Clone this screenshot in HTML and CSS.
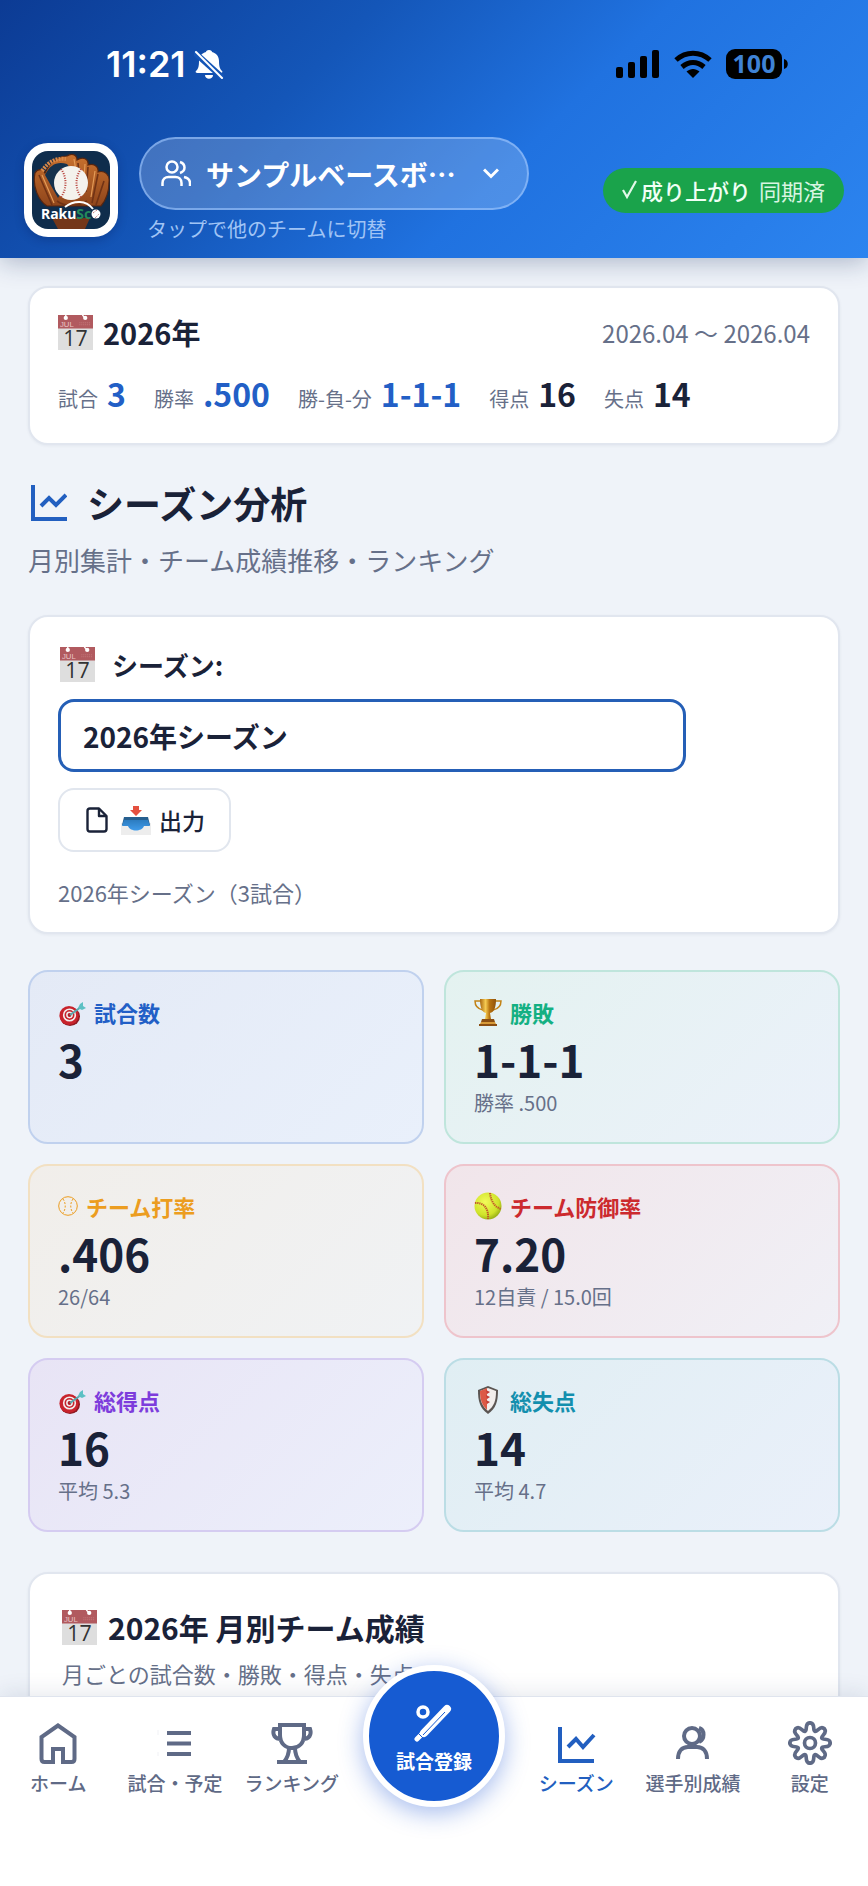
FILE: index.html
```html
<!DOCTYPE html>
<html lang="ja">
<head>
<meta charset="utf-8">
<meta name="viewport" content="width=device-width, initial-scale=1">
<title>シーズン分析</title>
<link rel="stylesheet" href="styles.css">
</head>
<body>
<svg class="defs" aria-hidden="true">
  <defs>
    <radialGradient id="lime" cx=".4" cy=".35" r=".7"><stop offset="0" stop-color="#f2fb5a"/><stop offset=".7" stop-color="#cfe32a"/><stop offset="1" stop-color="#8fa613"/></radialGradient>
    <linearGradient id="gold"><stop offset="0" stop-color="#a8650f"/><stop offset=".35" stop-color="#f6cb52"/><stop offset=".6" stop-color="#b8730f"/><stop offset="1" stop-color="#8f520a"/></linearGradient>
    <linearGradient id="leather" x2="0" y2="1"><stop offset="0" stop-color="#c9722f"/><stop offset="1" stop-color="#8f451b"/></linearGradient>
    <linearGradient id="tray" x2="0" y2="1"><stop offset="0" stop-color="#2c7cc0"/><stop offset="1" stop-color="#3f9bea"/></linearGradient>
    <path id="tooth" d="M11 0Q11 1.950 8.100 2.060Q5.200 2.150 7.190 4.290Q9.160 6.420 7.780 7.780"/>
  </defs>
  <symbol id="calendar" viewBox="0 0 36 36">
    <path fill="#dedede" d="M0 13h36v23H0z"/><path fill="#b15a5f" d="M0 0h36v14H0z"/>
    <circle cx="8" cy="3" r="2.200" fill="#fff"/><circle cx="28" cy="3" r="2.200" fill="#fff"/><path stroke="#fff" stroke-width="1.400" d="M8 0v3M25 0l3 3"/>
    <text x="2" y="12" font-family="Liberation Sans" font-weight="400" font-size="8" fill="#e8c4c5">JUL</text>
    <path stroke="#c4797c" stroke-dasharray="1 1" d="M22 8h12M22 10h12"/>
    <text x="18" y="32" text-anchor="middle" font-family="Open Sans" font-weight="400" font-size="22" fill="#333">17</text>
  </symbol>
  <symbol id="target" viewBox="0 0 28 28">
    <ellipse cx="12" cy="18.500" rx="10" ry="9.400" fill="#8e1a22"/><ellipse cx="11" cy="17.500" rx="9.600" ry="9.400" fill="#c8232c"/>
    <circle cx="11.500" cy="17" r="6.600" fill="#f3eeee"/><circle cx="11.500" cy="17" r="5" fill="#c8232c"/><circle cx="11.500" cy="17" r="3.400" fill="#f3eeee"/><circle cx="11.500" cy="17" r="1.900" fill="#b01d26"/>
    <path stroke="#58a9ae" stroke-width="2" d="M12 17l11-8"/><path fill="#5cc0c4" d="M20 10l2-4 3-2v4l3 2-4 2z"/>
  </symbol>
  <symbol id="cup" viewBox="0 0 28 28">
    <path fill="none" stroke="#c28216" stroke-width="1.500" d="M7 3H1c0 6 3 8 8 9M21 3h6c0 6-3 8-8 9"/>
    <path fill="url(#gold)" d="M6 1h16c0 9-2 13-6 14l1 6h-6l1-6C8 14 6 10 6 1z"/>
    <path fill="#8b4e12" d="M8 21h12l1 3H7zM5 26h18v2H5z"/><path fill="#d79a38" d="M7 24h14l1 2H6z"/>
  </symbol>
  <symbol id="softball" viewBox="0 0 28 28">
    <circle cx="14" cy="14" r="13.500" fill="url(#lime)"/>
    <path fill="none" stroke="#c2562a" stroke-width="2" stroke-dasharray="1.300 .8" d="M1 11c8-1 14 5 13 16M16 1c1 9 5 14 11 16"/>
  </symbol>
  <symbol id="shield" viewBox="0 0 28 28">
    <path fill="#5b5552" d="M14 0l10 4c0 12-2 18-10 24C6 22 4 16 4 4z"/>
    <path fill="#f2eeec" d="M14 2l8 3c0 10-2 15-8 20C8 20 6 15 6 5z"/><path fill="#dc5945" d="M13 2v22C8 19 6 14 6 5z"/>
    <path fill="#c33c33" d="M12 4l4 2-3 2zM12 9l4 2-3 2zM12 14l4 2-3 2z"/>
  </symbol>
  <symbol id="chart" viewBox="0 0 36 36"><path fill="none" stroke="currentColor" stroke-width="4" d="M2 0v34h34M10 21l8-8 7 7 10-10"/></symbol>
</svg>

<div class="app">
  <header class="header">
    <div class="status">
      <div class="status-side">
        <span class="time">11:21</span>
        <svg class="bell" viewBox="0 0 30 30"><path fill="#fff" d="M15 1c2 0 3 1 3 2 4 1 7 4 7 9 0 6 1 8 3 10 1 1 0 2-1 2H3c-1 0-2-1-1-2 2-2 3-4 3-10 0-5 3-8 7-9 0-1 1-2 3-2zM11 26h8c0 5-8 5-8 0z"/><path stroke="#1455b7" stroke-width="6" d="M0 3l30 27"/><path stroke="#fff" stroke-width="2" stroke-linecap="round" d="M2 3l26 26"/></svg>
      </div>
      <div class="status-side">
        <svg class="signal" viewBox="0 0 44 28"><rect y="17" width="7" height="11" rx="2"/><rect x="12" y="12" width="7" height="16" rx="2"/><rect x="24" y="6" width="7" height="22" rx="2"/><rect x="36" width="7" height="28" rx="2"/></svg>
        <svg class="wifi" viewBox="0 0 38 28"><g fill="none" stroke="#000" stroke-width="5"><path d="M2 10c10-9 24-9 34 0"/><path d="M8 17c7-6 15-6 22 0"/></g><path d="M12.500 21.500c4-3.500 9-3.500 13 0L19 28z"/></svg>
        <svg class="battery" viewBox="0 0 62 30"><rect width="56" height="30" rx="9"/><path d="M58 10c5 1 5 9 0 10z"/><text x="28" y="24" text-anchor="middle" font-family="Open Sans" font-weight="700" font-size="25" fill="#3f83d6">100</text></svg>
      </div>
    </div>
    <div class="team-bar">
      <div class="logo">
        <svg viewBox="0 0 78 78" role="img" aria-label="RakuSco">
          <rect width="78" height="78" rx="16" fill="#0f2d4c"/>
          <path fill="#74371a" d="M20 67h38l-5 11H26z"/>
          <path fill="url(#leather)" stroke="#552510" stroke-width="1.200" d="M3 22c3-5 8-4 10 0 5-11 14-17 22-17 4-3 10-2 10 4 6-4 12-1 11 5 5-2 11 1 10 7 7-2 12 3 11 10 0 10-3 18-8 24H15C7 50 0 36 3 22z"/>
          <path fill="#15324d" d="M13 24c5-11 13-14 22-11 4 4 4 12 0 18l-9 16z"/>
          <path fill="none" stroke="#713315" stroke-width="1.600" d="M7 24l13 30M46 12l1 12M56 16l-2 25M66 23l-6 29M72 30l-8 24M25 50c8 6 20 6 30 0"/>
          <path fill="none" stroke="#e49b57" stroke-width="1.200" d="M10 24l12 28M42 8l2 12M53 13l-1 15M63 20l-4 26"/>
          <path fill="none" stroke="#d98948" stroke-width="4" stroke-dasharray="2 1" d="M10 20C17 10 24 7 34 8"/>
          <circle cx="39" cy="32" r="17" fill="#f4f2ed"/>
          <path fill="none" stroke="#b63b35" stroke-width="2" stroke-dasharray="1 1.400" d="M29 18c6 8 6 20 0 28M49 18c-6 8-6 20 0 28"/>
          <path fill="none" stroke="#fff" stroke-width="2" d="M33 56c9-7 21-7 28 2"/>
          <text x="9" y="68" font-family="Noto Sans" font-size="14" font-weight="700" fill="#fff">Raku<tspan fill="#258a5a">Sc</tspan></text>
          <circle cx="64" cy="63" r="4.500" fill="#fff"/><path stroke="#a33" stroke-width=".8" stroke-dasharray="1 1" d="M61 62l4-3M63 67l4-4"/>
        </svg>
      </div>
      <div class="team">
        <button class="team-switch" type="button">
          <svg class="people" viewBox="0 0 30 28" fill="none" stroke="#fff" stroke-width="2.500"><circle cx="11" cy="7" r="5.500"/><path d="M1.500 26v-3c0-4 3-6 6-6h7c3 0 6 2 6 6v3M19 2c6 2 6 9 0 11M23 17c4 1 6 3 6 6v3"/></svg>
          <span class="team-name">サンプルベースボ…</span>
          <svg class="chevron" viewBox="0 0 16 11"><path fill="none" stroke="#fff" stroke-width="3" d="M1 1.500l7 7 7-7"/></svg>
        </button>
        <p class="team-hint">タップで他のチームに切替</p>
      </div>
      <div class="sync"><svg class="tick" viewBox="0 0 16 20"><path fill="none" stroke="#e2f8e8" stroke-width="2.200" d="M1 10l4 7L14 1"/></svg><b>成り上がり</b><span>同期済</span></div>
    </div>
  </header>

  <main class="main">
    <section class="card summary">
      <div class="summary-head">
        <h2 class="summary-year"><svg class="cal"><use href="#calendar"/></svg>2026年</h2>
        <span class="range">2026.04 ～ 2026.04</span>
      </div>
      <dl class="totals">
        <div><dt>試合</dt><dd class="accent">3</dd></div>
        <div><dt>勝率</dt><dd class="accent">.500</dd></div>
        <div><dt>勝-負-分</dt><dd class="accent">1-1-1</dd></div>
        <div><dt>得点</dt><dd>16</dd></div>
        <div><dt>失点</dt><dd>14</dd></div>
      </dl>
    </section>

    <div class="title">
      <h1><svg class="title-icon"><use href="#chart"/></svg>シーズン分析</h1>
      <p>月別集計・チーム成績推移・ランキング</p>
    </div>

    <section class="card season">
      <label class="season-label" for="season"><svg class="cal"><use href="#calendar"/></svg>シーズン:</label>
      <select class="season-select" id="season"><option>2026年シーズン</option></select>
      <button class="export" type="button">
        <svg class="file" viewBox="0 0 22 26"><path fill="none" stroke="#1a2238" stroke-width="2.400" stroke-linejoin="round" d="M4 1.500h9l7.500 7.500v13c0 1.500-1 2.500-2.500 2.500H4c-1.500 0-2.500-1-2.500-2.500V4C1.500 2.500 2.500 1.500 4 1.500zM13 1.500V9h7.500"/></svg>
        <svg class="inbox" viewBox="0 0 30 30"><path fill="#ededed" d="M0 18h30v12H0z"/><path fill="#265f8f" d="M3 12h24l2 8H1z"/><path fill="url(#tray)" d="M3 15h24l2 6h-6c-2 6-14 6-16 0H1z"/><path fill="#e4503f" d="M12 1h6v4h3l-6 6-6-6h3z"/></svg>
        <span>出力</span>
      </button>
      <p class="season-note">2026年シーズン（3試合）</p>
    </section>

    <section class="stats">
      <article class="stat blue"><h3><svg class="emoji"><use href="#target"/></svg>試合数</h3><strong>3</strong></article>
      <article class="stat green"><h3><svg class="emoji"><use href="#cup"/></svg>勝敗</h3><strong>1-1-1</strong><p>勝率 .500</p></article>
      <article class="stat amber"><h3><svg class="ball" viewBox="0 0 20 20" fill="none" stroke="currentColor"><circle cx="10" cy="10" r="9.300"/><path stroke-dasharray="2 1.500" d="M5 3c3 4 3 10 0 14M15 3c-3 4-3 10 0 14"/></svg>チーム打率</h3><strong>.406</strong><p>26/64</p></article>
      <article class="stat red"><h3><svg class="emoji"><use href="#softball"/></svg>チーム防御率</h3><strong>7.20</strong><p>12自責 / 15.0回</p></article>
      <article class="stat purple"><h3><svg class="emoji"><use href="#target"/></svg>総得点</h3><strong>16</strong><p>平均 5.3</p></article>
      <article class="stat teal"><h3><svg class="emoji"><use href="#shield"/></svg>総失点</h3><strong>14</strong><p>平均 4.7</p></article>
    </section>

    <section class="card monthly">
      <h2><svg class="cal"><use href="#calendar"/></svg>2026年 月別チーム成績</h2>
      <p>月ごとの試合数・勝敗・得点・失点</p>
    </section>
  </main>

  <nav class="nav">
    <a href="#home"><svg viewBox="0 0 44 44"><path d="M22 4.500L5.500 16v22c0 2 1 3 3 3H17V28h10v13h8.500c2 0 3-1 3-3V16z"/></svg>ホーム</a>
    <a href="#games"><svg viewBox="0 0 44 44"><path d="M14 12h24M14 22.500h24M14 33h24"/><path stroke="#f0f1f5" stroke-width="1" d="M5 9v5M5 31v4"/></svg>試合・予定</a>
    <a href="#ranking"><svg viewBox="0 0 44 44"><path d="M10 4h24v10c0 8-5 13-12 13S10 22 10 14zM10 8H4c-2 6 1 10 7 10M34 8h6c2 6-1 10-7 10M19 27c0 5-1 9-5 14M25 27c0 5 1 9 5 14M7 41h30"/></svg>ランキング</a>
    <div class="fab-slot">
      <button class="fab" type="button"><svg viewBox="0 0 40 40"><circle cx="9" cy="9" r="5" fill="none" stroke="#fff" stroke-width="3.500"/><path stroke="#fff" stroke-width="8" stroke-linecap="round" d="M10 30L33 6"/><path stroke="#fff" stroke-width="5" stroke-linecap="round" d="M3 36l6-6"/><path stroke="#165bd2" d="M9 32L31 9M4 30l6 6"/></svg>試合登録</button>
    </div>
    <a href="#season" class="current" aria-current="page"><svg viewBox="0 0 44 44"><path d="M6 6v34h34M14 26l8-8 7 8 11-12"/></svg>シーズン</a>
    <a href="#players"><svg viewBox="0 0 44 44"><circle cx="21" cy="15" r="8"/><path d="M7 38c0-8 4-12 10-12h9c6 0 10 4 10 12M28 7c6 2 6 11 0 14"/></svg>選手別成績</a>
    <a href="#settings"><svg viewBox="-12 -12 24 24"><g class="thin"><use href="#tooth"/><use href="#tooth" transform="rotate(45)"/><use href="#tooth" transform="rotate(90)"/><use href="#tooth" transform="rotate(135)"/><use href="#tooth" transform="rotate(180)"/><use href="#tooth" transform="rotate(225)"/><use href="#tooth" transform="rotate(270)"/><use href="#tooth" transform="rotate(315)"/><circle r="3"/></g></svg>設定</a>
  </nav>
</div>
</body>
</html>
```

FILE: styles.css
```css
* { box-sizing: border-box; }
body, h1, h2, h3, p, dl, dd { margin: 0; }
body {
  font-family: "Noto Sans CJK JP", sans-serif;
  color: #1a2238;
  background: #eff3f9;
}
svg { display: block; flex: none; }
button, select { font: inherit; color: inherit; }
.defs { position: absolute; width: 0; height: 0; }

.app { height: 100vh; display: flex; flex-direction: column; overflow: hidden; }

.header {
  position: relative;
  z-index: 1;
  padding: 36px 24px 15px;
  color: #fff;
  background: linear-gradient(135deg, #0c3b94 0%, #1456b8 34%, #2072e0 60%, #2c84ef 100%);
  box-shadow: 0 4px 24px rgba(15, 40, 90, .3);
}
.status { display: flex; justify-content: space-between; align-items: center; height: 56px; padding: 0 56px 0 82px; }
.status-side { display: flex; align-items: center; }
.time { font: 600 36px/40px Inter, sans-serif; }
.bell { width: 30px; height: 30px; margin-left: 8px; }
.signal { width: 44px; height: 28px; }
.wifi { width: 38px; height: 28px; margin-left: 14px; }
.battery { width: 62px; height: 30px; margin-left: 14px; }

.team-bar { display: flex; align-items: center; margin-top: 45px; }
.logo { width: 94px; height: 94px; padding: 8px; border-radius: 24px; background: #fff; box-shadow: 0 3px 10px rgba(0, 20, 70, .25); flex: none; }
.team { margin-left: 21px; min-width: 0; }
.team-switch {
  display: flex; align-items: center;
  width: 390px; max-width: 100%; height: 73px; padding: 0 28px 0 20px;
  border: 2px solid rgba(160, 200, 255, .6);
  border-radius: 37px;
  background: rgba(255, 255, 255, .2);
}
.people { width: 30px; height: 28px; }
.team-name { margin-left: 15px; font-size: 28px; font-weight: 700; white-space: nowrap; overflow: hidden; }
.chevron { width: 16px; height: 11px; margin-left: auto; }
.team-hint { margin: 5px 0 0 8px; font-size: 20px; line-height: 28px; color: #a0c4f5; }
.sync {
  display: flex; align-items: center;
  height: 45px; margin-left: auto; padding: 0 19px;
  border-radius: 23px; background: #1aa34b; color: #d8f5e1;
  font-size: 22px; white-space: nowrap;
}
.sync b { margin: 0 8px 0 3px; font-weight: 500; color: #f0fff5; }
.tick { width: 16px; height: 20px; }

.main { flex: 1; min-height: 0; overflow-y: auto; scrollbar-width: none; padding: 28px; }
.card { border: 2px solid #e1e6ef; border-radius: 20px; background: #fff; padding: 28px; box-shadow: 0 1px 3px rgba(30, 50, 90, .06); }
.cal { width: 35px; height: 35px; }

.summary { padding: 24px 28px 20px; }
.summary-head { display: flex; justify-content: space-between; align-items: center; height: 40px; }
.summary-year { display: flex; align-items: center; gap: 10px; font-size: 29px; line-height: 40px; }
.range { font-size: 24px; color: #667089; }
.totals { display: flex; gap: 28px; margin-top: 17px; }
.totals div { display: flex; align-items: baseline; gap: 9px; line-height: 48px; }
.totals dt { font-size: 20px; color: #667089; }
.totals dd { font-size: 32px; font-weight: 700; }
.totals .accent { color: #225fc6; }

.title { margin-top: 30px; }
.title h1 { display: flex; align-items: center; gap: 20px; font-size: 37px; line-height: 56px; padding-left: 3px; }
.title-icon { width: 36px; height: 36px; color: #225fc0; }
.title p { margin-top: 10px; font-size: 26px; line-height: 38px; color: #667089; }

.season { margin-top: 36px; padding-bottom: 24px; }
.season-label { display: flex; align-items: center; gap: 17px; height: 38px; padding-left: 2px; font-size: 26px; font-weight: 700; }
.season-select {
  display: block; appearance: none;
  width: 100%; max-width: 628px; height: 73px; margin-top: 16px; padding: 0 22px;
  border: 3px solid #255fb6; border-radius: 16px; background: #fff;
  font-size: 28px; font-weight: 700;
}
.export {
  display: flex; align-items: center;
  height: 64px; margin-top: 16px; padding: 0 24px 0 26px;
  border: 2px solid #e1e6ee; border-radius: 16px; background: #fff;
  font-size: 23px; font-weight: 500;
}
.file { width: 22px; height: 26px; }
.inbox { width: 30px; height: 30px; margin: 0 8px 0 13px; }
.season-note { margin-top: 24px; font-size: 22px; line-height: 32px; color: #667089; }

.stats { display: grid; grid-template-columns: 1fr 1fr; gap: 20px; margin-top: 36px; }
.stat { min-height: 174px; padding: 23px 28px 25px; border: 2px solid; border-radius: 20px; }
.stat h3 { display: flex; align-items: center; gap: 8px; height: 34px; font-size: 22px; line-height: 34px; }
.emoji { width: 28px; height: 28px; }
.ball { width: 20px; height: 20px; }
.stat strong { display: block; font-size: 44px; line-height: 60px; }
.stat p { font-size: 20px; line-height: 28px; color: #667089; }
.blue { border-color: #c0d1ee; background: linear-gradient(135deg, #e4eaf6, #e9f0fb); }
.blue h3 { color: #225fc6; }
.green { border-color: #bfe5dc; background: linear-gradient(135deg, #e4f2f0, #ebf1fa); }
.green h3 { color: #14b083; }
.amber { border-color: #f2e0c2; background: linear-gradient(135deg, #f1eeea, #f0f2f4); }
.amber h3 { color: #ec9d20; }
.red { border-color: #eec4cc; background: linear-gradient(135deg, #f1e5ea, #f0f0f6); }
.red h3 { color: #cc2a2e; }
.purple { border-color: #d5ccf1; background: linear-gradient(135deg, #e8e4f5, #eceffb); }
.purple h3 { color: #7d3cdc; }
.teal { border-color: #bbdde5; background: linear-gradient(135deg, #e0eef3, #eaf0fa); }
.teal h3 { color: #138fae; }

.monthly { margin-top: 40px; padding: 31px 32px; }
.monthly h2 { display: flex; align-items: center; gap: 11px; font-size: 30px; line-height: 44px; }
.monthly p { margin-top: 8px; font-size: 22px; line-height: 32px; color: #667089; }

.nav {
  position: relative; z-index: 1;
  display: flex; flex: none;
  height: 190px; padding-top: 24px;
  border-top: 1px solid #dfe4ee; background: #fff;
  box-shadow: 0 -4px 20px rgba(30, 50, 90, .1);
}
.nav a {
  flex: 1; display: flex; flex-direction: column; align-items: center; gap: 4px;
  font-size: 19px; line-height: 28px; font-weight: 500; color: #5f6a86;
  text-decoration: none; white-space: nowrap;
}
.nav a svg { width: 44px; height: 44px; fill: none; stroke: currentColor; stroke-width: 4; }
.nav a .thin { stroke-width: 2; stroke-linecap: round; }
.nav .current { color: #225fc0; }
.fab-slot { position: relative; width: 168px; flex: none; }
.fab {
  position: absolute; left: 50%; top: -56px; transform: translateX(-50%);
  display: flex; flex-direction: column; align-items: center; justify-content: center; gap: 3px;
  width: 142px; height: 142px; padding: 6px 0 0;
  border: 6px solid #fff; border-radius: 50%;
  background: #165bd2; color: #fff;
  font-size: 19px; font-weight: 700; line-height: 30px;
  box-shadow: 0 6px 24px rgba(30, 85, 210, .4);
}
.fab svg { width: 40px; height: 40px; }
```
